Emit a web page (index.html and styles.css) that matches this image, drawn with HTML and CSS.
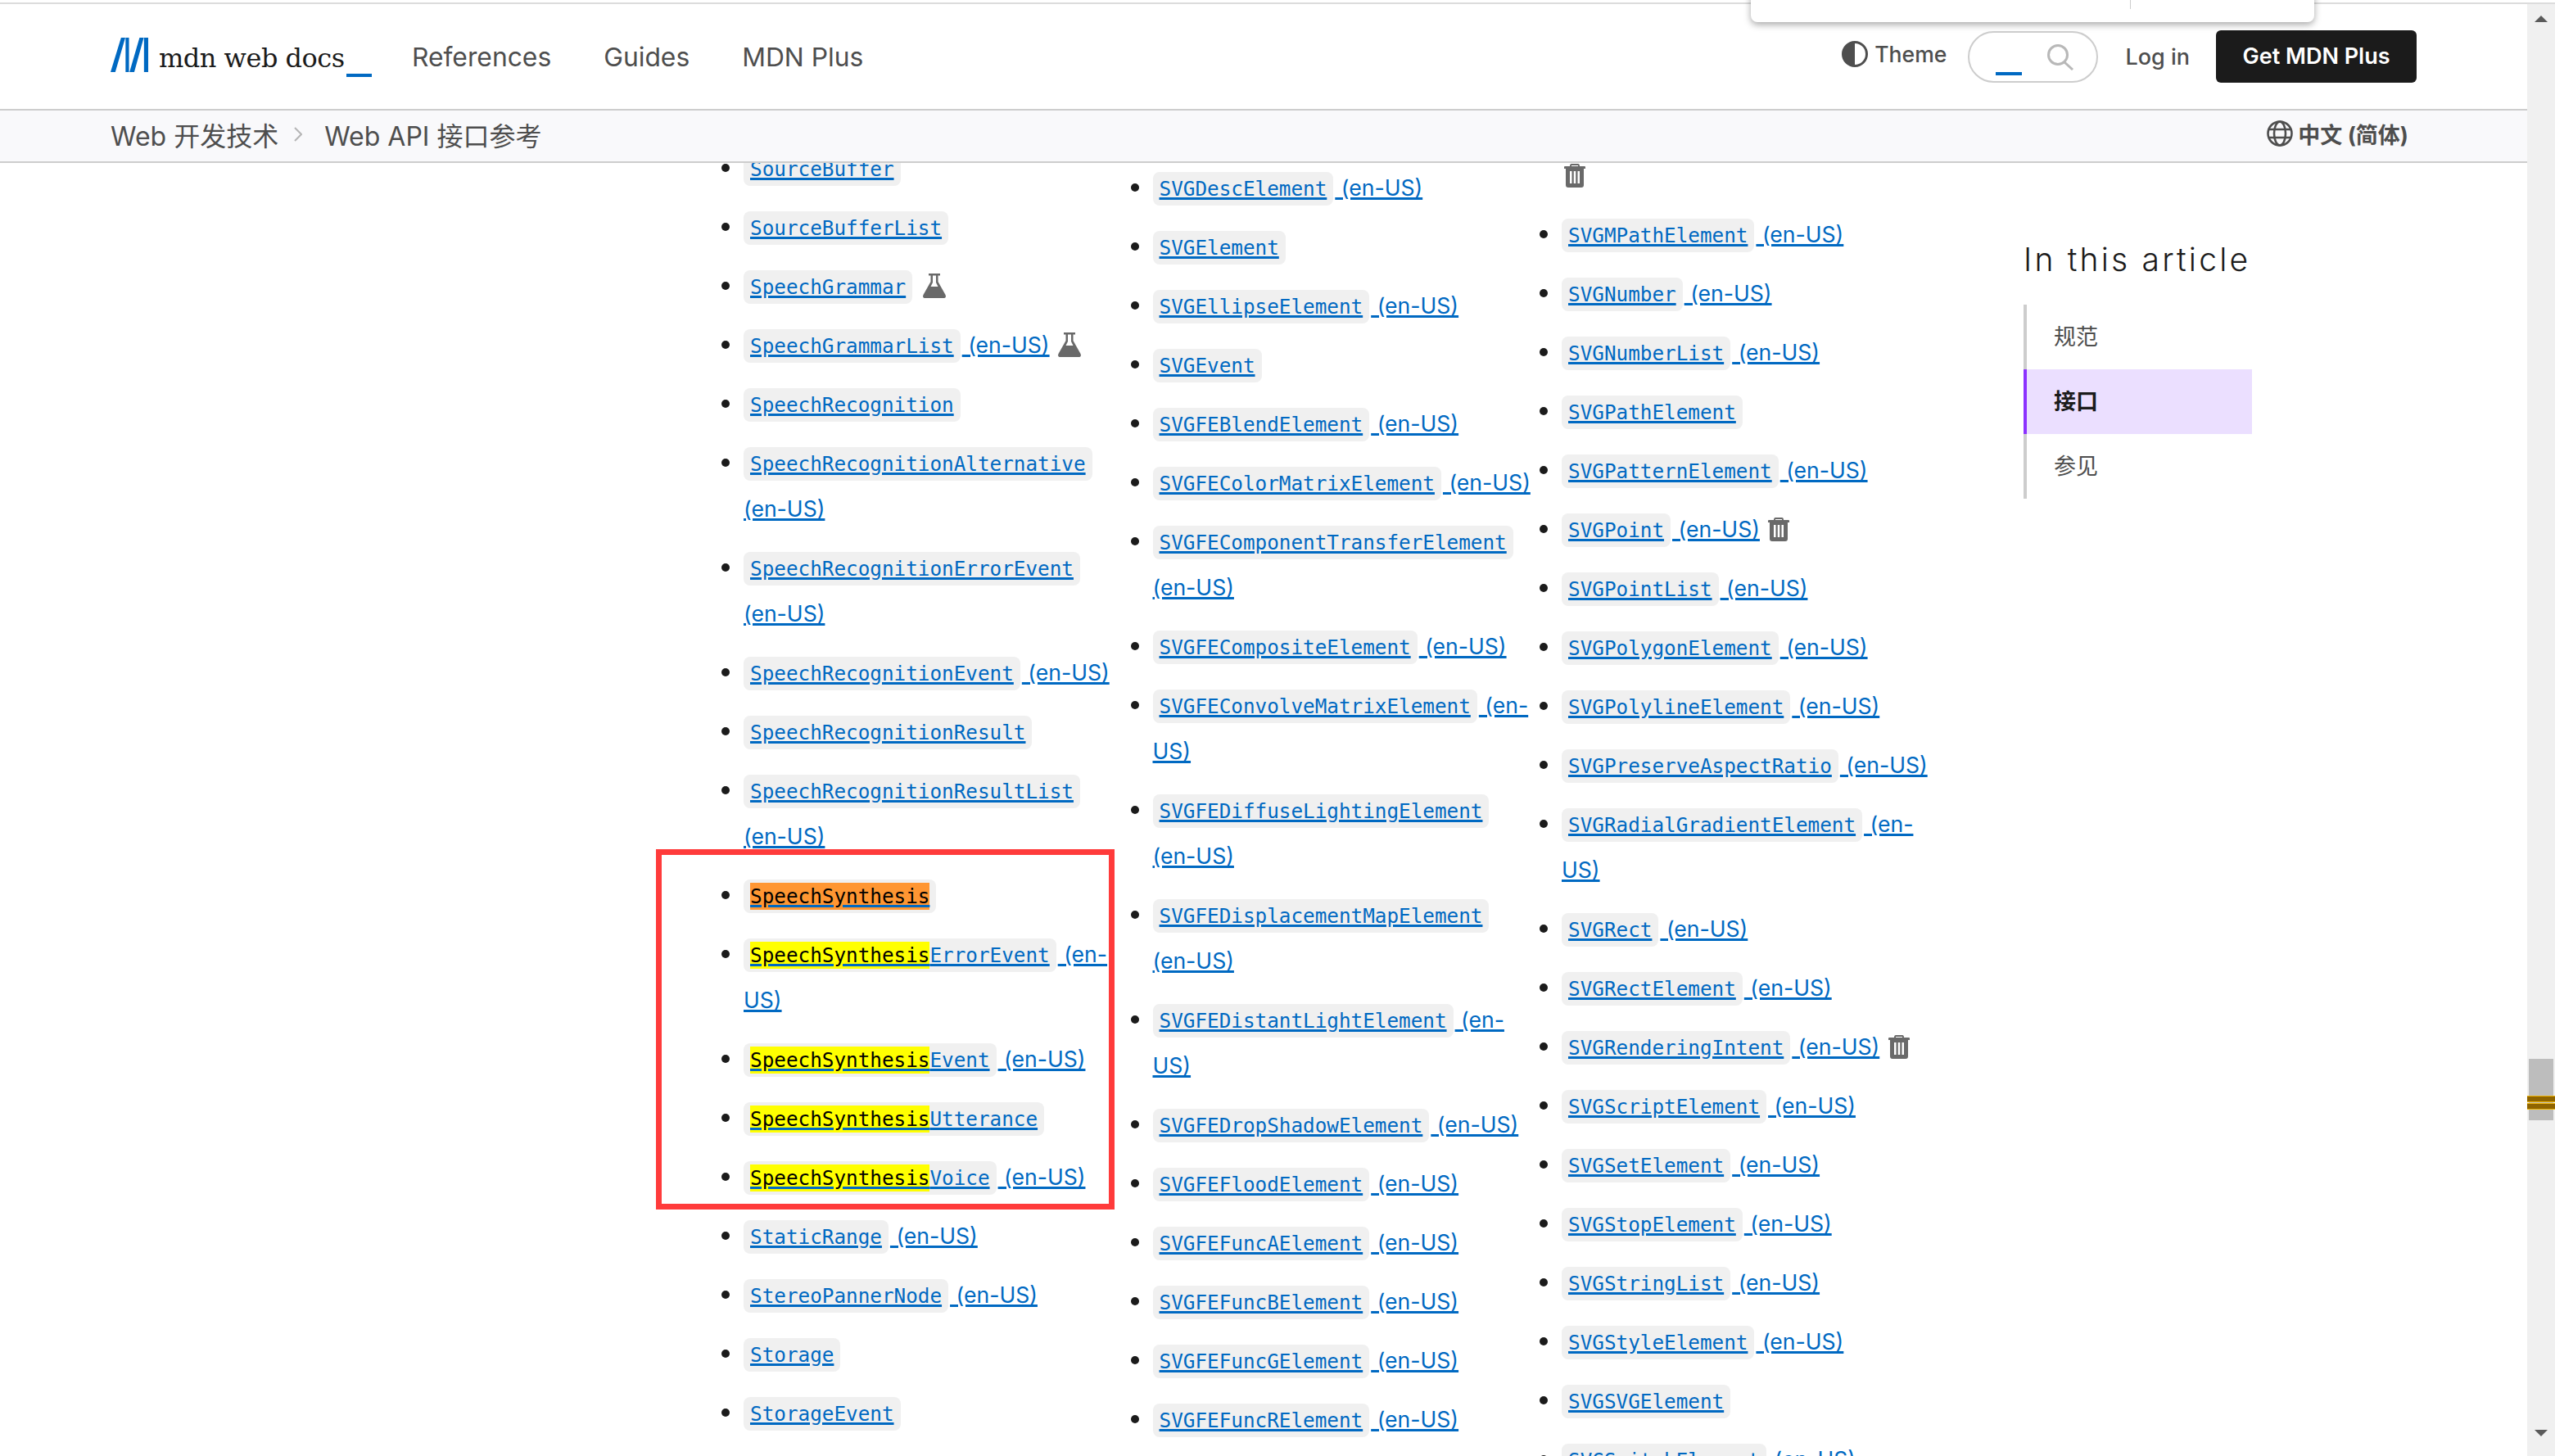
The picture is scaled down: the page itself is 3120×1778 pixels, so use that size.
FILE: index.html
```html
<!DOCTYPE html>
<html lang="zh-CN">
<head>
    <meta charset="UTF-8">
    <title>Web API 接口参考 | MDN</title>
    <link rel="stylesheet" href="styles.css">
</head>
<body>
    <div class="top-line"></div>
    <div class="window">
        <div class="page">
            <header class="site-head">
                <a class="logo" href="#">
                    <svg class="logo-mark" viewBox="15 12 143 123" preserveAspectRatio="none"><path d="M15 135 L55 12 L71 12 L33 135 Z M72 12 H85 V135 H72 Z M87 135 L125 12 L141 12 L105 135 Z M142 12 H158 V135 H142 Z"/></svg>
                    <span class="logo-text">mdn web docs</span>
                    <span class="logo-under"></span>
                </a>
                <nav class="main-nav">
                    <a href="#">References</a>
                    <a href="#">Guides</a>
                    <a href="#">MDN Plus</a>
                </nav>
                <div class="head-tools">
                    <span class="theme">
                        <svg class="theme-icon" viewBox="0 0 32 32"><circle cx="16" cy="16" r="14.5" fill="none" stroke="#4e4e4e" stroke-width="3"/><path d="M16 1.5 A14.5 14.5 0 0 0 16 30.5 Z" fill="#4e4e4e"/></svg>
                        Theme
                    </span>
                    <div class="search-box">
                        <span class="search-caret"></span>
                        <svg class="search-icon" viewBox="0 0 32 32"><circle cx="13" cy="13" r="11.5" fill="none" stroke="#b8b8b8" stroke-width="3"/><path d="M21 22 L31 31" stroke="#b8b8b8" stroke-width="3"/></svg>
                    </div>
                    <a class="login" href="#">Log in</a>
                    <a class="get-plus" href="#">Get MDN Plus</a>
                </div>
            </header>
            <div class="crumb-bar">
                <a href="#">Web 开发技术</a>
                <svg class="crumb-sep" viewBox="0 0 10 18"><path d="M1 1 L9 9 L1 17" fill="none" stroke="#b5b5b5" stroke-width="2"/></svg>
                <a href="#">Web API 接口参考</a>
                <span class="lang">
                    <svg class="globe" viewBox="0 0 32 32" fill="none" stroke="#4e4e4e" stroke-width="2.6"><circle cx="16" cy="16" r="14.5"/><ellipse cx="16" cy="16" rx="7" ry="14.5"/><path d="M2 11 H30 M2 21 H30"/></svg>
                    中文 (简体)
                </span>
            </div>
            <main class="content">
                <div class="api-cols">
                    <ul class="api-list col-a">
                        <li><a href="#"><code>SourceBuffer</code></a></li>
                        <li><a href="#"><code>SourceBufferList</code></a></li>
                        <li><a href="#"><code>SpeechGrammar</code></a> <svg class="flask" viewBox="0 0 28 30"><use href="#flask-shape"/></svg></li>
                        <li><a href="#"><code>SpeechGrammarList</code> (en-US)</a> <svg class="flask" viewBox="0 0 28 30"><use href="#flask-shape"/></svg></li>
                        <li><a href="#"><code>SpeechRecognition</code></a></li>
                        <li><a href="#"><code>SpeechRecognitionAlternative</code> (en-US)</a></li>
                        <li><a href="#"><code>SpeechRecognitionErrorEvent</code> (en-US)</a></li>
                        <li><a href="#"><code>SpeechRecognitionEvent</code> (en-US)</a></li>
                        <li><a href="#"><code>SpeechRecognitionResult</code></a></li>
                        <li><a href="#"><code>SpeechRecognitionResultList</code> (en-US)</a></li>
                        <li><a href="#"><code><mark class="current">SpeechSynthesis</mark></code></a></li>
                        <li><a href="#"><code><mark>SpeechSynthesis</mark>ErrorEvent</code> (en-US)</a></li>
                        <li><a href="#"><code><mark>SpeechSynthesis</mark>Event</code> (en-US)</a></li>
                        <li><a href="#"><code><mark>SpeechSynthesis</mark>Utterance</code></a></li>
                        <li><a href="#"><code><mark>SpeechSynthesis</mark>Voice</code> (en-US)</a></li>
                        <li><a href="#"><code>StaticRange</code> (en-US)</a></li>
                        <li><a href="#"><code>StereoPannerNode</code> (en-US)</a></li>
                        <li><a href="#"><code>Storage</code></a></li>
                        <li><a href="#"><code>StorageEvent</code></a></li>
                    </ul>
                    <ul class="api-list col-b">
                        <li><a href="#"><code>SVGDescElement</code> (en-US)</a></li>
                        <li><a href="#"><code>SVGElement</code></a></li>
                        <li><a href="#"><code>SVGEllipseElement</code> (en-US)</a></li>
                        <li><a href="#"><code>SVGEvent</code></a></li>
                        <li><a href="#"><code>SVGFEBlendElement</code> (en-US)</a></li>
                        <li><a href="#"><code>SVGFEColorMatrixElement</code> (en-US)</a></li>
                        <li><a href="#"><code>SVGFEComponentTransferElement</code> (en-US)</a></li>
                        <li><a href="#"><code>SVGFECompositeElement</code> (en-US)</a></li>
                        <li><a href="#"><code>SVGFEConvolveMatrixElement</code> (en-US)</a></li>
                        <li><a href="#"><code>SVGFEDiffuseLightingElement</code> (en-US)</a></li>
                        <li><a href="#"><code>SVGFEDisplacementMapElement</code> (en-US)</a></li>
                        <li><a href="#"><code>SVGFEDistantLightElement</code> (en-US)</a></li>
                        <li><a href="#"><code>SVGFEDropShadowElement</code> (en-US)</a></li>
                        <li><a href="#"><code>SVGFEFloodElement</code> (en-US)</a></li>
                        <li><a href="#"><code>SVGFEFuncAElement</code> (en-US)</a></li>
                        <li><a href="#"><code>SVGFEFuncBElement</code> (en-US)</a></li>
                        <li><a href="#"><code>SVGFEFuncGElement</code> (en-US)</a></li>
                        <li><a href="#"><code>SVGFEFuncRElement</code> (en-US)</a></li>
                    </ul>
                    <ul class="api-list col-c">
                        <li><a href="#"><code>SVGMetadataElement</code> (en-US)</a><br><svg class="trash" viewBox="0 0 26 29"><use href="#trash-shape"/></svg></li>
                        <li><a href="#"><code>SVGMPathElement</code> (en-US)</a></li>
                        <li><a href="#"><code>SVGNumber</code> (en-US)</a></li>
                        <li><a href="#"><code>SVGNumberList</code> (en-US)</a></li>
                        <li><a href="#"><code>SVGPathElement</code></a></li>
                        <li><a href="#"><code>SVGPatternElement</code> (en-US)</a></li>
                        <li><a href="#"><code>SVGPoint</code> (en-US)</a> <svg class="trash" viewBox="0 0 26 29"><use href="#trash-shape"/></svg></li>
                        <li><a href="#"><code>SVGPointList</code> (en-US)</a></li>
                        <li><a href="#"><code>SVGPolygonElement</code> (en-US)</a></li>
                        <li><a href="#"><code>SVGPolylineElement</code> (en-US)</a></li>
                        <li><a href="#"><code>SVGPreserveAspectRatio</code> (en-US)</a></li>
                        <li><a href="#"><code>SVGRadialGradientElement</code> (en-US)</a></li>
                        <li><a href="#"><code>SVGRect</code> (en-US)</a></li>
                        <li><a href="#"><code>SVGRectElement</code> (en-US)</a></li>
                        <li><a href="#"><code>SVGRenderingIntent</code> (en-US)</a> <svg class="trash" viewBox="0 0 26 29"><use href="#trash-shape"/></svg></li>
                        <li><a href="#"><code>SVGScriptElement</code> (en-US)</a></li>
                        <li><a href="#"><code>SVGSetElement</code> (en-US)</a></li>
                        <li><a href="#"><code>SVGStopElement</code> (en-US)</a></li>
                        <li><a href="#"><code>SVGStringList</code> (en-US)</a></li>
                        <li><a href="#"><code>SVGStyleElement</code> (en-US)</a></li>
                        <li><a href="#"><code>SVGSVGElement</code></a></li>
                        <li><a href="#"><code>SVGSwitchElement</code> (en-US)</a></li>
                    </ul>
                </div>
                <aside class="toc">
                    <h2>In this article</h2>
                    <ul class="toc-list">
                        <li><a href="#">规范</a></li>
                        <li class="active"><a href="#">接口</a></li>
                        <li><a href="#">参见</a></li>
                    </ul>
                </aside>
            </main>
        </div>
        <div class="scrollbar">
            <span class="arrow-up"></span>
            <div class="thumb">
                <span class="hit hit-a"></span>
                <span class="hit hit-b"></span>
            </div>
            <span class="arrow-down"></span>
        </div>
    </div>

    <!-- find-in-page box, cut off by the top of the window -->
    <div class="find-popup"><span class="find-divider"></span></div>
    <!-- red box drawn over the screenshot -->
    <div class="red-box"></div>

    <svg class="icon-defs" width="0" height="0">
        <symbol id="flask-shape" viewBox="0 0 28 30">
            <path d="M7 0 H21 V2.5 H18.5 V10 L27.5 26 Q29 30 25 30 H3 Q-1 30 .5 26 L9.5 10 V2.5 H7 Z M12 2.5 V11 L9.5 16 H18.5 L16 11 V2.5 Z" fill="#696969" fill-rule="evenodd"/>
        </symbol>
        <symbol id="trash-shape" viewBox="0 0 26 29">
            <path d="M9 0 H17 Q19 0 19 3 H25 Q26 3 26 4 V6 H24 V26 Q24 29 21 29 H5 Q2 29 2 26 V6 H0 V4 Q0 3 1 3 H7 Q7 0 9 0 Z M9 2 V3 H17 V2 Z M7 9 V24 H9.5 V9 Z M11.75 9 V24 H14.25 V9 Z M16.5 9 V24 H19 V9 Z" fill="#696969" fill-rule="evenodd"/>
        </symbol>
    </svg>
</body>
</html>
```

FILE: styles.css
```css
html, body {
    margin: 0;
    padding: 0;
    height: 1778px;
    overflow: hidden;
    background: white;
    font-family: Inter, "Noto Sans CJK SC", sans-serif;
    color: #1b1b1b;
}
a {
    color: inherit;
    text-decoration: none;
}
.top-line {
    height: 2px;
    margin-top: 3px;
    background: #dcdcdc;
}
.window {
    display: flex;
    height: 1773px;
}
.page {
    flex: 1;
    min-width: 0;
    display: flex;
    flex-direction: column;
}

/* header */
.site-head {
    display: flex;
    align-items: center;
    height: 128px;
    padding: 0 135px;
    border-bottom: 2px solid #cdcdcd;
    flex: none;
}
.logo {
    display: flex;
    align-items: flex-start;
    width: 320px;
    height: 48px;
    margin-top: 2px;
}
.logo-mark {
    width: 46px;
    height: 42px;
    fill: #0069c2;
    flex: none;
}
.logo-text {
    margin-left: 13px;
    font-family: "DejaVu Serif", serif;
    font-size: 32px;
    letter-spacing: -0.5px;
    line-height: 50px;
    color: #1b1b1b;
    white-space: nowrap;
}
.logo-under {
    width: 31px;
    height: 4px;
    margin: 44px 0 0 2px;
    background: #0069c2;
    flex: none;
}
.main-nav {
    display: flex;
    gap: 64px;
    margin-left: 48px;
    font-size: 31.8px;
    color: #4e4e4e;
}
.head-tools {
    margin-left: auto;
    display: flex;
    align-items: center;
    color: #4e4e4e;
}
.theme {
    display: flex;
    align-items: center;
    gap: 8px;
    font-size: 26.6px;
    font-weight: 500;
    margin-top: -6px;
}
.theme-icon {
    width: 32px;
    height: 32px;
}
.search-box {
    position: relative;
    width: 159px;
    height: 63px;
    margin-left: 26px;
    border: 2px solid #cdcdcd;
    border-radius: 32px;
    box-sizing: border-box;
}
.search-caret {
    position: absolute;
    left: 32px;
    top: 48px;
    width: 32px;
    height: 4px;
    background: #0069c2;
}
.search-icon {
    position: absolute;
    left: 95px;
    top: 14px;
    width: 32px;
    height: 32px;
}
.login {
    margin-left: 33px;
    font-size: 27px;
    font-weight: 500;
}
.get-plus {
    margin-left: 32px;
    width: 245px;
    height: 64px;
    line-height: 64px;
    text-align: center;
    background: #1b1b1b;
    color: white;
    border-radius: 6px;
    font-size: 27px;
    font-weight: 600;
}

/* breadcrumbs */
.crumb-bar {
    display: flex;
    align-items: center;
    height: 58px;
    padding: 0 145px 4px 135px;
    background: #f9f9fb;
    border-bottom: 2px solid #cdcdcd;
    font-size: 32px;
    color: #4e4e4e;
    flex: none;
}
.crumb-sep {
    width: 10px;
    height: 18px;
    margin: 0 27px 0 19px;
}
.lang {
    margin-left: auto;
    display: flex;
    align-items: center;
    gap: 6px;
    font-size: 27px;
    font-weight: 700;
    margin-top: -2px;
}
.globe {
    width: 32px;
    height: 32px;
}

/* api lists */
.content {
    flex: 1;
    min-height: 0;
    overflow: hidden;
    display: flex;
    align-items: flex-start;
    padding-left: 908px;
}
.api-cols {
    display: grid;
    grid-template-columns: repeat(3, 464px);
    column-gap: 35.5px;
    flex: none;
}
.api-list {
    margin: 0;
    padding: 0;
    list-style: none;
    font-size: 26.6px;
    line-height: 56px;
    font-weight: 400;
}
.col-a {
    margin-top: -22px;
}
.col-b {
    margin-top: 2px;
}
.col-c {
    margin-top: -69px;
}
.api-list li {
    position: relative;
    margin-bottom: 16px;
}
.api-list li::before {
    content: "";
    position: absolute;
    left: -27px;
    top: 23px;
    width: 10px;
    height: 10px;
    border-radius: 50%;
    background: #1b1b1b;
}
.api-list a {
    color: #0069c2;
    text-decoration: underline;
    text-decoration-thickness: 3px;
}
code {
    font-family: "DejaVu Sans Mono", monospace;
    font-size: 24.3px;
    line-height: 1;
    padding: 6px 8px;
    margin-right: 2px;
    background: #f0f0f0;
    border-radius: 8px;
}
mark {
    background: #ffff00;
    color: black;
    padding: 2px 0;
}
mark.current {
    background: #ff9632;
}
.flask, .trash {
    vertical-align: -5px;
    margin-left: 3px;
}
.flask {
    width: 28px;
    height: 30px;
}
.trash {
    width: 26px;
    height: 29px;
}
.icon-defs {
    position: absolute;
}

/* sidebar */
.toc {
    width: 279px;
    margin-left: 100px;
    margin-top: 93px;
    flex: none;
}
.toc h2 {
    margin: 0 0 30px 0;
    font-size: 39px;
    font-weight: 300;
    line-height: 50px;
    letter-spacing: 3.2px;
    white-space: nowrap;
}
.toc-list {
    margin: 0;
    padding: 0;
    list-style: none;
    font-size: 27px;
    color: #4e4e4e;
}
.toc-list li {
    height: 79px;
    line-height: 79px;
    padding-left: 33px;
    border-left: 4px solid #cdcdcd;
}
.toc-list li.active {
    background: #ebdfff;
    border-left-color: #8c32ff;
    color: #1b1b1b;
    font-weight: 700;
}

/* page scrollbar */
.scrollbar {
    position: relative;
    display: flex;
    flex-direction: column;
    align-items: center;
    width: 34px;
    background: #f0f0f0;
    flex: none;
}
.arrow-up {
    margin-top: 14px;
    border: 8px solid transparent;
    border-top: none;
    border-bottom: 8px solid #5a5a5a;
}
.thumb {
    position: relative;
    width: 30px;
    height: 75px;
    margin-top: 1266px;
    background: #bdbdbd;
}
.hit {
    position: absolute;
    left: -2px;
    right: -2px;
    height: 6px;
    background: #8f6400;
    border-top: 1px solid #f0b400;
    border-bottom: 1px solid #f0b400;
}
.hit-a {
    top: 45px;
}
.hit-b {
    top: 54px;
}
.arrow-down {
    margin-top: auto;
    margin-bottom: 24px;
    border: 8px solid transparent;
    border-bottom: none;
    border-top: 8px solid #5a5a5a;
}

/* overlays */
.find-popup {
    position: absolute;
    left: 2138px;
    top: -20px;
    width: 688px;
    height: 47px;
    background: white;
    border-radius: 8px;
    box-shadow: 0 3px 8px rgba(0, 0, 0, 0.35);
}
.find-divider {
    position: absolute;
    left: 463px;
    top: 20px;
    width: 1px;
    height: 11px;
    background: #cdcdcd;
}
.red-box {
    position: absolute;
    left: 801px;
    top: 1037px;
    width: 560px;
    height: 440px;
    box-sizing: border-box;
    border: 7px solid #ff3b3b;
}
```
